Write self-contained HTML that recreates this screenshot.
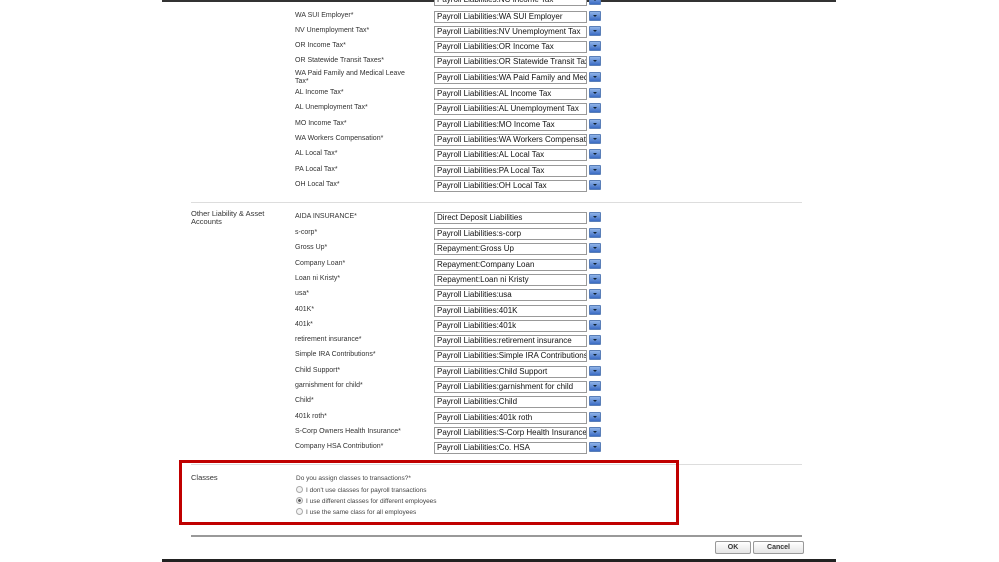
<!DOCTYPE html>
<html><head><style>
body{margin:0;width:999px;height:562px;background:#fff;position:relative;overflow:hidden;font-family:"Liberation Sans",sans-serif;}
.a{position:absolute}
.l{position:absolute;left:295px;font-size:7px;color:#333;line-height:8px;width:128px}
.s{position:absolute;left:434px;width:153px;box-sizing:border-box;height:12px;border:1px solid #999;font-size:8px;line-height:10px;padding-left:2px;white-space:nowrap;overflow:hidden;color:#111;background:#fff}
.b{position:absolute;left:589px;width:10px;height:8px;background:linear-gradient(#8fb4e8,#3b6cc4);border:1px solid #5a7fb8;border-radius:1px}
.b:after{content:"";position:absolute;left:3px;top:3px;border-left:2px solid transparent;border-right:2px solid transparent;border-top:2px solid #123}
.hr{position:absolute;left:191px;width:611px;height:1px;background:#ddd}
.r{position:absolute;left:296px;font-size:6.5px;color:#444}
.r i{display:inline-block;width:5px;height:5px;border:1px solid #aaa;border-radius:50%;margin-right:3px;vertical-align:-1px;background:#f4f4f4}
.btn{position:absolute;top:541px;height:11px;border:1px solid #999;border-radius:2px;background:linear-gradient(#fff,#e4e4e4);font-size:7px;font-weight:bold;text-align:center;line-height:11px;color:#333}
</style></head><body>
<div class="a" style="left:162px;top:0;width:674px;height:2px;background:#333"></div>
<div class="a" style="left:162px;top:559px;width:674px;height:3px;background:#222"></div>

<div class="s" style="top:-6px">Payroll Liabilities:NC Income Tax</div><div class="b" style="top:-5px"></div>

<div class="l" style="top:12px">WA SUI Employer*</div><div class="s" style="top:11px">Payroll Liabilities:WA SUI Employer</div><div class="b" style="top:11px"></div>
<div class="l" style="top:27px">NV Unemployment Tax*</div><div class="s" style="top:26px">Payroll Liabilities:NV Unemployment Tax</div><div class="b" style="top:26px"></div>
<div class="l" style="top:42px">OR Income Tax*</div><div class="s" style="top:41px">Payroll Liabilities:OR Income Tax</div><div class="b" style="top:41px"></div>
<div class="l" style="top:57px">OR Statewide Transit Taxes*</div><div class="s" style="top:56px">Payroll Liabilities:OR Statewide Transit Taxes</div><div class="b" style="top:56px"></div>
<div class="l" style="top:70px;width:112px">WA Paid Family and Medical Leave Tax*</div><div class="s" style="top:72px">Payroll Liabilities:WA Paid Family and Medical</div><div class="b" style="top:72px"></div>
<div class="l" style="top:89px">AL Income Tax*</div><div class="s" style="top:88px">Payroll Liabilities:AL Income Tax</div><div class="b" style="top:88px"></div>
<div class="l" style="top:104px">AL Unemployment Tax*</div><div class="s" style="top:103px">Payroll Liabilities:AL Unemployment Tax</div><div class="b" style="top:103px"></div>
<div class="l" style="top:120px">MO Income Tax*</div><div class="s" style="top:119px">Payroll Liabilities:MO Income Tax</div><div class="b" style="top:119px"></div>
<div class="l" style="top:135px">WA Workers Compensation*</div><div class="s" style="top:134px">Payroll Liabilities:WA Workers Compensation</div><div class="b" style="top:134px"></div>
<div class="l" style="top:150px">AL Local Tax*</div><div class="s" style="top:149px">Payroll Liabilities:AL Local Tax</div><div class="b" style="top:149px"></div>
<div class="l" style="top:166px">PA Local Tax*</div><div class="s" style="top:165px">Payroll Liabilities:PA Local Tax</div><div class="b" style="top:165px"></div>
<div class="l" style="top:181px">OH Local Tax*</div><div class="s" style="top:180px">Payroll Liabilities:OH Local Tax</div><div class="b" style="top:180px"></div>

<div class="hr" style="top:202px"></div>
<div class="a" style="left:191px;top:210px;font-size:7.5px;color:#333;line-height:8px;width:100px">Other Liability &amp; Asset Accounts</div>

<div class="l" style="top:213px">AIDA INSURANCE*</div><div class="s" style="top:212px">Direct Deposit Liabilities</div><div class="b" style="top:212px"></div>
<div class="l" style="top:229px">s-corp*</div><div class="s" style="top:228px">Payroll Liabilities:s-corp</div><div class="b" style="top:228px"></div>
<div class="l" style="top:244px">Gross Up*</div><div class="s" style="top:243px">Repayment:Gross Up</div><div class="b" style="top:243px"></div>
<div class="l" style="top:260px">Company Loan*</div><div class="s" style="top:259px">Repayment:Company Loan</div><div class="b" style="top:259px"></div>
<div class="l" style="top:275px">Loan ni Kristy*</div><div class="s" style="top:274px">Repayment:Loan ni Kristy</div><div class="b" style="top:274px"></div>
<div class="l" style="top:290px">usa*</div><div class="s" style="top:289px">Payroll Liabilities:usa</div><div class="b" style="top:289px"></div>
<div class="l" style="top:306px">401K*</div><div class="s" style="top:305px">Payroll Liabilities:401K</div><div class="b" style="top:305px"></div>
<div class="l" style="top:321px">401k*</div><div class="s" style="top:320px">Payroll Liabilities:401k</div><div class="b" style="top:320px"></div>
<div class="l" style="top:336px">retirement insurance*</div><div class="s" style="top:335px">Payroll Liabilities:retirement insurance</div><div class="b" style="top:335px"></div>
<div class="l" style="top:351px">Simple IRA Contributions*</div><div class="s" style="top:350px">Payroll Liabilities:Simple IRA Contributions</div><div class="b" style="top:350px"></div>
<div class="l" style="top:367px">Child Support*</div><div class="s" style="top:366px">Payroll Liabilities:Child Support</div><div class="b" style="top:366px"></div>
<div class="l" style="top:382px">garnishment for child*</div><div class="s" style="top:381px">Payroll Liabilities:garnishment for child</div><div class="b" style="top:381px"></div>
<div class="l" style="top:397px">Child*</div><div class="s" style="top:396px">Payroll Liabilities:Child</div><div class="b" style="top:396px"></div>
<div class="l" style="top:413px">401k roth*</div><div class="s" style="top:412px">Payroll Liabilities:401k roth</div><div class="b" style="top:412px"></div>
<div class="l" style="top:428px">S-Corp Owners Health Insurance*</div><div class="s" style="top:427px">Payroll Liabilities:S-Corp Health Insurance</div><div class="b" style="top:427px"></div>
<div class="l" style="top:443px">Company HSA Contribution*</div><div class="s" style="top:442px">Payroll Liabilities:Co. HSA</div><div class="b" style="top:442px"></div>

<div class="hr" style="top:464px"></div>
<div class="a" style="left:179px;top:460px;width:494px;height:59px;border:3px solid #c00000"></div>
<div class="a" style="left:191px;top:473px;font-size:7.5px;color:#333">Classes</div>
<div class="r" style="top:475px">Do you assign classes to transactions?*</div>
<div class="r" style="top:486px"><i></i>I don't use classes for payroll transactions</div>
<div class="r" style="top:497px"><i style="background:radial-gradient(#555 35%,#eee 45%)"></i>I use different classes for different employees</div>
<div class="r" style="top:508px"><i></i>I use the same class for all employees</div>

<div class="a" style="left:191px;top:535px;width:611px;height:2px;background:#999"></div>
<div class="btn" style="left:715px;width:34px">OK</div>
<div class="btn" style="left:753px;width:49px">Cancel</div>
</body></html>
